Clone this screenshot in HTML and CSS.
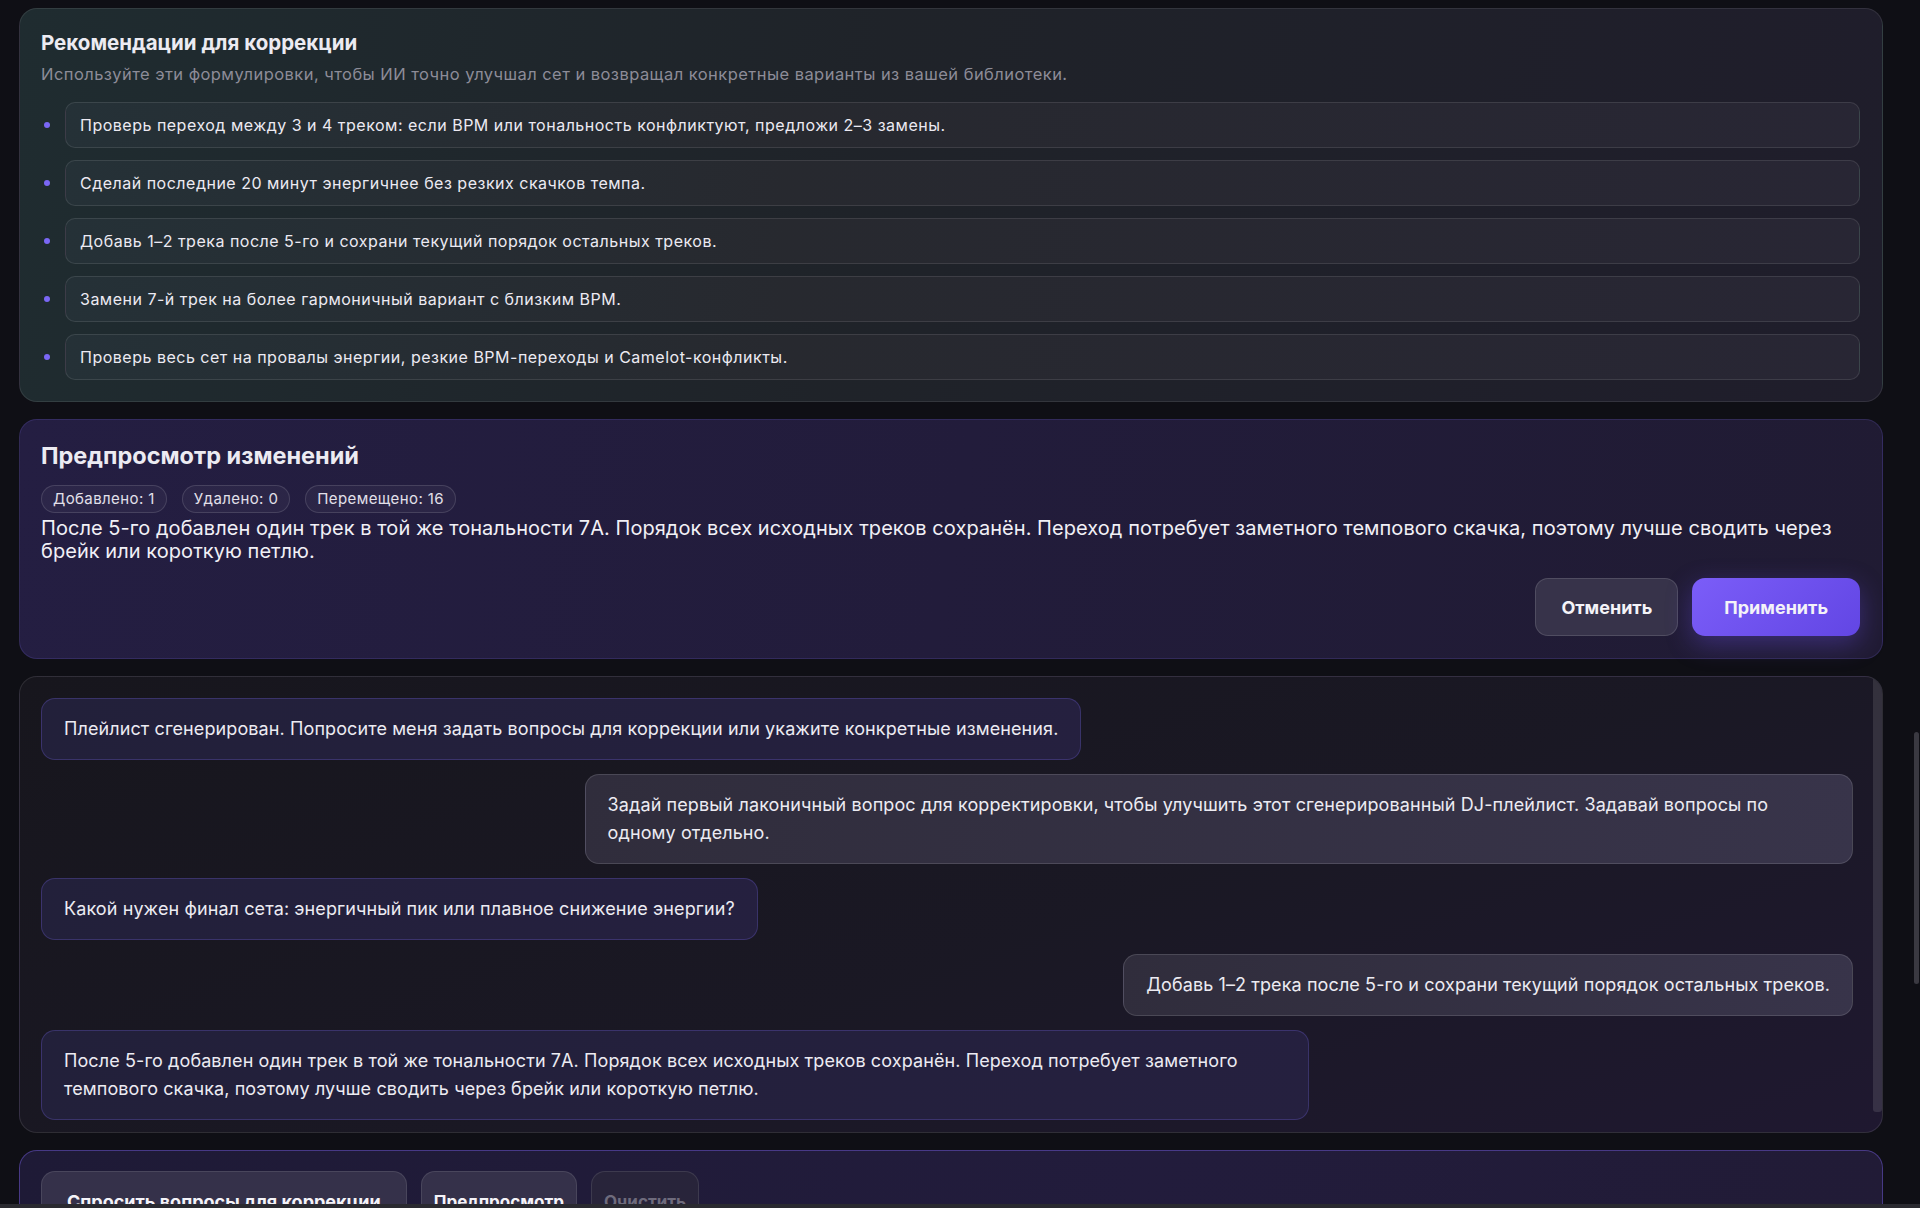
FILE: index.html
```html
<!DOCTYPE html>
<html lang="ru">
<head>
  <meta charset="UTF-8">
  <title>Коррекция плейлиста</title>
  <link rel="stylesheet" href="styles.css">
</head>
<body>
  <main class="page">

    <section class="card hints">
      <h3 class="hints-title">Рекомендации для коррекции</h3>
      <p class="hints-sub">Используйте эти формулировки, чтобы ИИ точно улучшал сет и возвращал конкретные варианты из вашей библиотеки.</p>
      <ul class="hints-list">
        <li><span class="dot"></span><span class="hint">Проверь переход между 3 и 4 треком: если BPM или тональность конфликтуют, предложи 2–3 замены.</span></li>
        <li><span class="dot"></span><span class="hint">Сделай последние 20 минут энергичнее без резких скачков темпа.</span></li>
        <li><span class="dot"></span><span class="hint">Добавь 1–2 трека после 5-го и сохрани текущий порядок остальных треков.</span></li>
        <li><span class="dot"></span><span class="hint">Замени 7-й трек на более гармоничный вариант с близким BPM.</span></li>
        <li><span class="dot"></span><span class="hint">Проверь весь сет на провалы энергии, резкие BPM-переходы и Camelot-конфликты.</span></li>
      </ul>
    </section>

    <section class="card preview">
      <h2 class="preview-title">Предпросмотр изменений</h2>
      <div class="chips">
        <span class="chip">Добавлено: 1</span>
        <span class="chip">Удалено: 0</span>
        <span class="chip">Перемещено: 16</span>
      </div>
      <p class="preview-text">После 5-го добавлен один трек в той же тональности 7A. Порядок всех исходных треков сохранён. Переход потребует заметного темпового скачка, поэтому лучше сводить через брейк или короткую петлю.</p>
      <div class="preview-actions">
        <button class="btn btn-ghost">Отменить</button>
        <button class="btn btn-primary">Применить</button>
      </div>
    </section>

    <section class="card chat">
      <div class="chat-log">
        <div class="msg bot">Плейлист сгенерирован. Попросите меня задать вопросы для коррекции или укажите конкретные изменения.</div>
        <div class="msg user">Задай первый лаконичный вопрос для корректировки, чтобы улучшить этот сгенерированный DJ-плейлист. Задавай вопросы по одному отдельно.</div>
        <div class="msg bot">Какой нужен финал сета: энергичный пик или плавное снижение энергии?</div>
        <div class="msg user">Добавь 1–2 трека после 5-го и сохрани текущий порядок остальных треков.</div>
        <div class="msg bot">После 5-го добавлен один трек в той же тональности 7A. Порядок всех исходных треков сохранён. Переход потребует заметного темпового скачка, поэтому лучше сводить через брейк или короткую петлю.</div>
      </div>
      <div class="chat-thumb"></div>
    </section>

    <section class="card composer">
      <button class="btn btn-soft btn-wide">Спросить вопросы для коррекции</button>
      <button class="btn btn-soft">Предпросмотр</button>
      <button class="btn btn-soft" disabled>Очистить</button>
    </section>

  </main>

  <div class="page-scroll"></div>
  <div class="window-edge"></div>
</body>
</html>
```

FILE: styles.css
```css
html, body {
  margin: 0;
  height: 100%;
  overflow: hidden;
}
body {
  background: #0f0f15;
  color: #ecebf2;
  font-family: Inter, "Noto Sans", sans-serif;
}
.page {
  display: flex;
  flex-direction: column;
  gap: 17px;
  padding: 8px 37px 0 19px;
}

.card {
  border: 1px solid rgba(255, 255, 255, 0.09);
  border-radius: 18px;
  box-sizing: border-box;
}

/* recommendations */
.hints {
  padding: 19px 22px 21px 21px;
  background: linear-gradient(100deg, #1f2c30 0%, #1f2329 45%, #1f1d2b 100%);
}
.hints-title {
  margin: 0;
  font-size: 20.5px;
  font-weight: 700;
  line-height: 30px;
}
.hints-sub {
  margin: 5px 0 0;
  font-size: 16.5px;
  letter-spacing: 0.45px;
  line-height: 22px;
  color: #8d8c98;
}
.hints-list {
  list-style: none;
  margin: 17px 0 0;
  padding: 0;
  display: flex;
  flex-direction: column;
  gap: 12px;
}
.hints-list li {
  display: flex;
  align-items: center;
  gap: 15px;
}
.dot {
  width: 6px;
  height: 6px;
  margin-left: 3px;
  border-radius: 50%;
  background: #7a67f5;
  flex: none;
}
.hint {
  flex: 1;
  padding: 12px 14px;
  font-size: 16px;
  letter-spacing: 0.5px;
  line-height: 20px;
  border: 1px solid rgba(255, 255, 255, 0.1);
  border-radius: 10px;
  background: linear-gradient(100deg, #253137 0%, #27292f 40%, #282634 100%);
  color: #eceaf2;
}

/* preview of changes */
.preview {
  padding: 21px 22px 22px 21px;
  background: linear-gradient(100deg, #241e42 0%, #221c3b 50%, #201b33 100%);
  border-color: rgba(130, 110, 240, 0.18);
}
.preview-title {
  margin: 0;
  font-size: 23.5px;
  font-weight: 700;
  line-height: 30px;
}
.chips {
  display: flex;
  gap: 15px;
  margin-top: 14px;
}
.chip {
  padding: 3px 11px;
  font-size: 15px;
  letter-spacing: 0.4px;
  line-height: 20px;
  border: 1px solid rgba(255, 255, 255, 0.13);
  border-radius: 999px;
  background: rgba(255, 255, 255, 0.04);
  color: #e2e0ea;
}
.preview-text {
  margin: 4px 0 0;
  font-size: 20px;
  letter-spacing: 0.05px;
  line-height: 23px;
  color: #f1f0f6;
}
.preview-actions {
  display: flex;
  justify-content: flex-end;
  gap: 14px;
  margin-top: 15px;
}

.btn {
  font-family: inherit;
  font-weight: 700;
  font-size: 18px;
  border-radius: 13px;
  color: #f4f3f8;
  cursor: pointer;
}
.btn-ghost {
  height: 58px;
  padding: 0 25px;
  background: #37334a;
  border: 1px solid rgba(255, 255, 255, 0.13);
}
.btn-primary {
  height: 58px;
  padding: 0 32px;
  border: none;
  background: linear-gradient(135deg, #7b5df8 0%, #6246e4 100%);
  box-shadow: 0 8px 26px rgba(110, 80, 240, 0.35);
}

/* chat log */
.chat {
  height: 457px;
  overflow: hidden;
  display: flex;
  background: linear-gradient(160deg, #17161d 0%, #1a1824 55%, #1f1830 100%);
  border-color: rgba(255, 255, 255, 0.1);
}
.chat-log {
  flex: 1;
  display: flex;
  flex-direction: column;
  gap: 14px;
  padding: 21px 20px 21px 21px;
}
.chat-thumb {
  width: 9px;
  margin-bottom: 20px;
  border-radius: 0 17px 6px 6px;
  background: rgba(255, 255, 255, 0.11);
}
.msg {
  max-width: 70%;
  box-sizing: border-box;
  padding: 16px 22px;
  font-size: 18px;
  letter-spacing: 0.1px;
  line-height: 28px;
  border-radius: 14px;
  flex: none;
}
.msg.bot {
  align-self: flex-start;
  background: linear-gradient(100deg, #22203a 0%, #25203f 100%);
  border: 1px solid rgba(120, 100, 230, 0.28);
}
.msg.user {
  align-self: flex-end;
  background: linear-gradient(100deg, #302d3c 0%, #38344a 100%);
  border: 1px solid rgba(255, 255, 255, 0.13);
}

/* composer actions */
.composer {
  display: flex;
  gap: 14px;
  padding: 20px 21px;
  background: linear-gradient(100deg, #1e1a36 0%, #221c3c 60%, #211b36 100%);
  border-color: rgba(120, 95, 230, 0.45);
}
.btn-soft {
  padding: 18px 12px;
  font-size: 17px;
  background: #35314a;
  border: 1px solid rgba(255, 255, 255, 0.1);
  border-radius: 14px;
  line-height: 24px;
}
.btn-wide {
  padding: 18px 25px;
  font-size: 18px;
}
.btn-soft:disabled {
  color: #6e6b7c;
  background: #28243a;
  cursor: default;
}

/* macOS overlay scrollbar and window edge */
.page-scroll {
  position: fixed;
  right: 1px;
  top: 732px;
  width: 5px;
  height: 252px;
  border-radius: 3px;
  background: #3a3941;
}
.window-edge {
  position: fixed;
  left: 0;
  right: 0;
  bottom: 0;
  height: 4px;
  background: #2a2a30;
}
```
